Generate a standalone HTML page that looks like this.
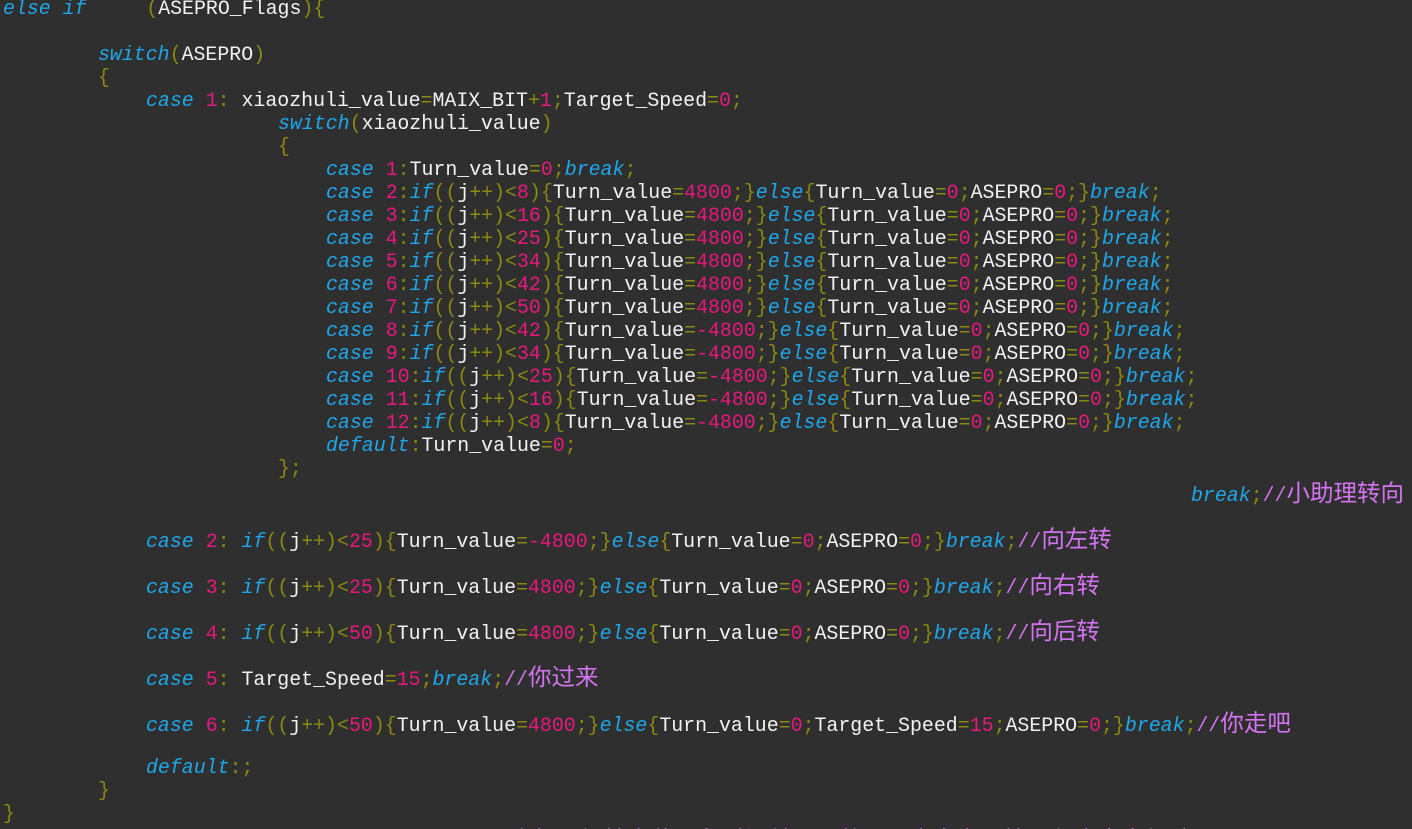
<!DOCTYPE html>
<html><head><meta charset="utf-8"><style>
html,body{margin:0;padding:0;background:#2f2f2f;width:1412px;height:829px;overflow:hidden}
#w{position:relative;width:1412px;height:829px;overflow:hidden}
.l{position:absolute;white-space:pre;font-family:"Liberation Mono","Noto Sans CJK SC",monospace;font-size:19.9px;line-height:23px;height:23px;color:#f2f2f2}
i{color:#1ea7ea;font-style:italic}
b{color:#8a8a10;font-weight:normal}
u{color:#e8187c;text-decoration:none}
s{color:#d474f2;text-decoration:none;font-family:"Liberation Mono","Noto Sans CJK SC",monospace}
s span{font-family:"Noto Sans CJK SC",sans-serif;font-size:23.5px;line-height:23px}
</style></head><body><div id="w">
<div class="l" style="left:3px;top:-3px"><i>else if</i>     <b>(</b>ASEPRO_Flags<b>){</b></div>
<div class="l" style="left:98px;top:43px"><i>switch</i><b>(</b>ASEPRO<b>)</b></div>
<div class="l" style="left:98px;top:66px"><b>{</b></div>
<div class="l" style="left:146px;top:89px"><i>case</i> <u>1</u><b>:</b> xiaozhuli_value<b>=</b>MAIX_BIT<b>+</b><u>1</u><b>;</b>Target_Speed<b>=</b><u>0</u><b>;</b></div>
<div class="l" style="left:278px;top:112px"><i>switch</i><b>(</b>xiaozhuli_value<b>)</b></div>
<div class="l" style="left:278px;top:135px"><b>{</b></div>
<div class="l" style="left:326px;top:158px"><i>case</i> <u>1</u><b>:</b>Turn_value<b>=</b><u>0</u><b>;</b><i>break</i><b>;</b></div>
<div class="l" style="left:326px;top:181px"><i>case</i> <u>2</u><b>:</b><i>if</i><b>((</b>j<b>++)&lt;</b><u>8</u><b>){</b>Turn_value<b>=</b><u>4800</u><b>;}</b><i>else</i><b>{</b>Turn_value<b>=</b><u>0</u><b>;</b>ASEPRO<b>=</b><u>0</u><b>;}</b><i>break</i><b>;</b></div>
<div class="l" style="left:326px;top:204px"><i>case</i> <u>3</u><b>:</b><i>if</i><b>((</b>j<b>++)&lt;</b><u>16</u><b>){</b>Turn_value<b>=</b><u>4800</u><b>;}</b><i>else</i><b>{</b>Turn_value<b>=</b><u>0</u><b>;</b>ASEPRO<b>=</b><u>0</u><b>;}</b><i>break</i><b>;</b></div>
<div class="l" style="left:326px;top:227px"><i>case</i> <u>4</u><b>:</b><i>if</i><b>((</b>j<b>++)&lt;</b><u>25</u><b>){</b>Turn_value<b>=</b><u>4800</u><b>;}</b><i>else</i><b>{</b>Turn_value<b>=</b><u>0</u><b>;</b>ASEPRO<b>=</b><u>0</u><b>;}</b><i>break</i><b>;</b></div>
<div class="l" style="left:326px;top:250px"><i>case</i> <u>5</u><b>:</b><i>if</i><b>((</b>j<b>++)&lt;</b><u>34</u><b>){</b>Turn_value<b>=</b><u>4800</u><b>;}</b><i>else</i><b>{</b>Turn_value<b>=</b><u>0</u><b>;</b>ASEPRO<b>=</b><u>0</u><b>;}</b><i>break</i><b>;</b></div>
<div class="l" style="left:326px;top:273px"><i>case</i> <u>6</u><b>:</b><i>if</i><b>((</b>j<b>++)&lt;</b><u>42</u><b>){</b>Turn_value<b>=</b><u>4800</u><b>;}</b><i>else</i><b>{</b>Turn_value<b>=</b><u>0</u><b>;</b>ASEPRO<b>=</b><u>0</u><b>;}</b><i>break</i><b>;</b></div>
<div class="l" style="left:326px;top:296px"><i>case</i> <u>7</u><b>:</b><i>if</i><b>((</b>j<b>++)&lt;</b><u>50</u><b>){</b>Turn_value<b>=</b><u>4800</u><b>;}</b><i>else</i><b>{</b>Turn_value<b>=</b><u>0</u><b>;</b>ASEPRO<b>=</b><u>0</u><b>;}</b><i>break</i><b>;</b></div>
<div class="l" style="left:326px;top:319px"><i>case</i> <u>8</u><b>:</b><i>if</i><b>((</b>j<b>++)&lt;</b><u>42</u><b>){</b>Turn_value<b>=</b><u>-4800</u><b>;}</b><i>else</i><b>{</b>Turn_value<b>=</b><u>0</u><b>;</b>ASEPRO<b>=</b><u>0</u><b>;}</b><i>break</i><b>;</b></div>
<div class="l" style="left:326px;top:342px"><i>case</i> <u>9</u><b>:</b><i>if</i><b>((</b>j<b>++)&lt;</b><u>34</u><b>){</b>Turn_value<b>=</b><u>-4800</u><b>;}</b><i>else</i><b>{</b>Turn_value<b>=</b><u>0</u><b>;</b>ASEPRO<b>=</b><u>0</u><b>;}</b><i>break</i><b>;</b></div>
<div class="l" style="left:326px;top:365px"><i>case</i> <u>10</u><b>:</b><i>if</i><b>((</b>j<b>++)&lt;</b><u>25</u><b>){</b>Turn_value<b>=</b><u>-4800</u><b>;}</b><i>else</i><b>{</b>Turn_value<b>=</b><u>0</u><b>;</b>ASEPRO<b>=</b><u>0</u><b>;}</b><i>break</i><b>;</b></div>
<div class="l" style="left:326px;top:388px"><i>case</i> <u>11</u><b>:</b><i>if</i><b>((</b>j<b>++)&lt;</b><u>16</u><b>){</b>Turn_value<b>=</b><u>-4800</u><b>;}</b><i>else</i><b>{</b>Turn_value<b>=</b><u>0</u><b>;</b>ASEPRO<b>=</b><u>0</u><b>;}</b><i>break</i><b>;</b></div>
<div class="l" style="left:326px;top:411px"><i>case</i> <u>12</u><b>:</b><i>if</i><b>((</b>j<b>++)&lt;</b><u>8</u><b>){</b>Turn_value<b>=</b><u>-4800</u><b>;}</b><i>else</i><b>{</b>Turn_value<b>=</b><u>0</u><b>;</b>ASEPRO<b>=</b><u>0</u><b>;}</b><i>break</i><b>;</b></div>
<div class="l" style="left:326px;top:434px"><i>default</i><b>:</b>Turn_value<b>=</b><u>0</u><b>;</b></div>
<div class="l" style="left:278px;top:457px"><b>};</b></div>
<div class="l" style="right:8px;top:480px"><i>break</i><b>;</b><s>//<span>小助理转向</span></s></div>
<div class="l" style="left:146px;top:526px"><i>case</i> <u>2</u><b>:</b> <i>if</i><b>((</b>j<b>++)&lt;</b><u>25</u><b>){</b>Turn_value<b>=</b><u>-4800</u><b>;}</b><i>else</i><b>{</b>Turn_value<b>=</b><u>0</u><b>;</b>ASEPRO<b>=</b><u>0</u><b>;}</b><i>break</i><b>;</b><s>//<span>向左转</span></s></div>
<div class="l" style="left:146px;top:572px"><i>case</i> <u>3</u><b>:</b> <i>if</i><b>((</b>j<b>++)&lt;</b><u>25</u><b>){</b>Turn_value<b>=</b><u>4800</u><b>;}</b><i>else</i><b>{</b>Turn_value<b>=</b><u>0</u><b>;</b>ASEPRO<b>=</b><u>0</u><b>;}</b><i>break</i><b>;</b><s>//<span>向右转</span></s></div>
<div class="l" style="left:146px;top:618px"><i>case</i> <u>4</u><b>:</b> <i>if</i><b>((</b>j<b>++)&lt;</b><u>50</u><b>){</b>Turn_value<b>=</b><u>4800</u><b>;}</b><i>else</i><b>{</b>Turn_value<b>=</b><u>0</u><b>;</b>ASEPRO<b>=</b><u>0</u><b>;}</b><i>break</i><b>;</b><s>//<span>向后转</span></s></div>
<div class="l" style="left:146px;top:664px"><i>case</i> <u>5</u><b>:</b> Target_Speed<b>=</b><u>15</u><b>;</b><i>break</i><b>;</b><s>//<span>你过来</span></s></div>
<div class="l" style="left:146px;top:710px"><i>case</i> <u>6</u><b>:</b> <i>if</i><b>((</b>j<b>++)&lt;</b><u>50</u><b>){</b>Turn_value<b>=</b><u>4800</u><b>;}</b><i>else</i><b>{</b>Turn_value<b>=</b><u>0</u><b>;</b>Target_Speed<b>=</b><u>15</u><b>;</b>ASEPRO<b>=</b><u>0</u><b>;}</b><i>break</i><b>;</b><s>//<span>你走吧</span></s></div>
<div class="l" style="left:146px;top:756px"><i>default</i><b>:;</b></div>
<div class="l" style="left:98px;top:779px"><b>}</b></div>
<div class="l" style="left:3px;top:802px"><b>}</b></div>
<div class="l" style="left:510px;top:827px"><s><span>小标量初始定位一段时间并且调整一下方向为了按照程序走出行驶</span></s></div>
</div></body></html>
